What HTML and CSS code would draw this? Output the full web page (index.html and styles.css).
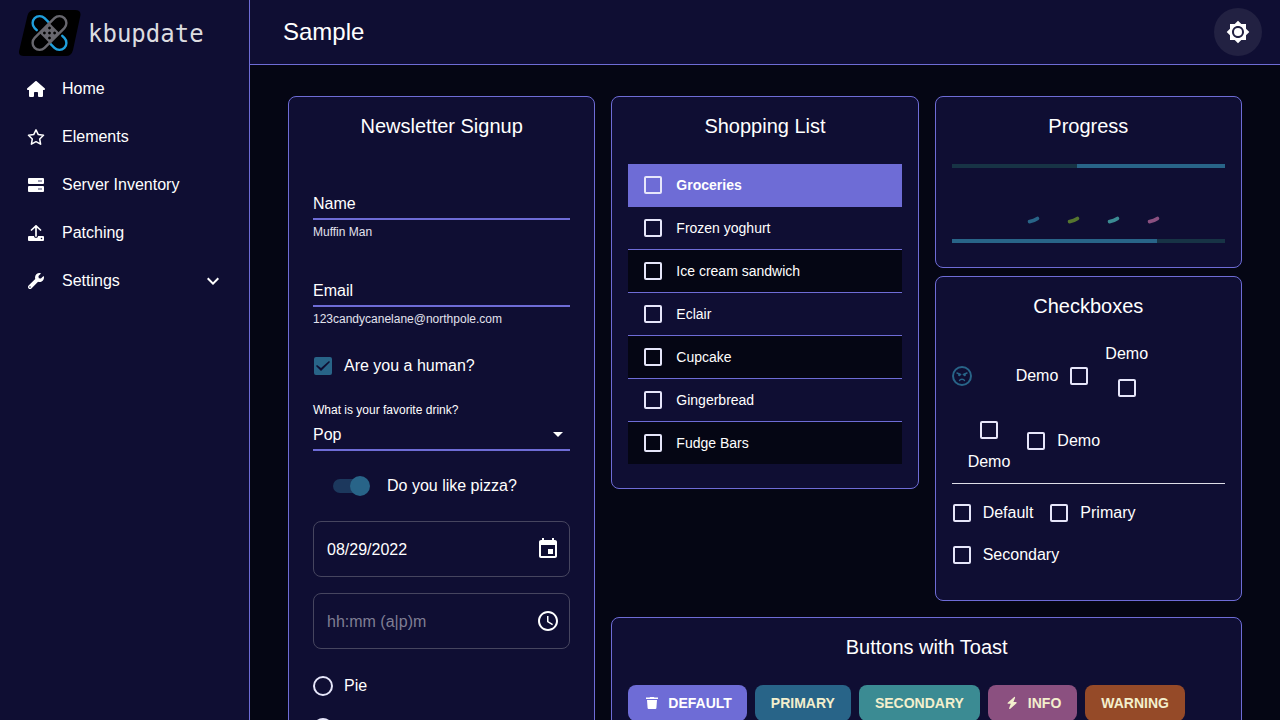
FILE: index.html
```html
<!DOCTYPE html>
<html lang="en">
<head>
<meta charset="utf-8">
<meta name="viewport" content="width=device-width, initial-scale=1">
<title>Sample - kbupdate</title>
<link rel="stylesheet" href="styles.css">
</head>
<body>
<div class="app">
  <aside class="sidebar">
    <a class="brand" href="#">
      <svg class="brand-logo" width="62" height="48" viewBox="0 0 62 48" aria-hidden="true">
        <path d="M15.500 1H56Q62.500 1 61.300 7L54 41Q52.500 47 47 47H5Q-1.300 47 .3 41L8.500 6.500Q10 1 15.500 1Z" fill="#000"/>
        <g transform="translate(30.500 24)" fill="none" stroke-width="2.400">
          <g stroke="#1f9fdc" stroke-linecap="round" transform="rotate(45)">
            <path d="M-8 -7H-14A7 7 0 0 0 -14 7H-11"/>
            <path d="M8 7H14A7 7 0 0 0 14 -7H11"/>
          </g>
          <g transform="rotate(-45)">
            <rect x="-21" y="-7" width="42" height="14" rx="7" stroke="#68676e"/>
            <rect x="-7" y="-7" width="14" height="14" fill="#68676e"/>
            <g fill="#000"><circle r="1.400"/><circle cx="-3.600" cy="-3.600" r="1.400"/><circle cx="3.600" cy="-3.600" r="1.400"/><circle cx="-3.600" cy="3.600" r="1.400"/><circle cx="3.600" cy="3.600" r="1.400"/></g>
          </g>
        </g>
      </svg>
      <span class="brand-name">kbupdate</span>
    </a>
    <nav class="nav">
      <a class="nav-item" href="#"><svg class="nav-icon" viewBox="0 0 576 512"><path d="M575.8 255.5c0 18-15 32.1-32 32.1h-32l.7 160.2c0 2.700-.2 5.400-.5 8.100V472c0 22.100-17.900 40-40 40H392c-22.100 0-40-17.900-40-40V384c0-17.700-14.300-32-32-32H256c-17.700 0-32 14.300-32 32v88c0 22.100-17.900 40-40 40H104c-22.100 0-40-17.900-40-40V287.600H32c-18 0-32-14-32-32.100c0-9 3-17 10-24L266.400 8c7-7 15-8 22-8s15 2 21 7L564.800 231.500c8 7 12 15 11 24z"/></svg>Home</a>
      <a class="nav-item" href="#"><svg class="nav-icon" viewBox="0 0 18 16"><path d="M9 .9 11.300 5.600 16.500 6.300 12.700 10 13.600 15.200 9 12.700 4.400 15.200 5.300 10 1.500 6.300 6.700 5.600Z" fill="none" stroke="currentColor" stroke-width="1.500" stroke-linejoin="round"/></svg>Elements</a>
      <a class="nav-item" href="#"><svg class="nav-icon" viewBox="0 0 18 16"><rect x="1" y="1" width="16" height="6" rx="1"/><rect x="1" y="9" width="16" height="6" rx="1"/><path d="M11 3h4v2h-4zM11 11h4v2h-4z" fill="#9f9fb4"/></svg>Server Inventory</a>
      <a class="nav-item" href="#"><svg class="nav-icon" viewBox="0 0 18 16"><path d="M4.500 5 9 .8 13.500 5M9 1.500V11" fill="none" stroke="currentColor" stroke-width="1.700" stroke-linecap="round" stroke-linejoin="round"/><path d="M2 11h5c0 2.500 4 2.500 4 0h5q1 0 1 1v3q0 1-1 1H2q-1 0-1-1v-3q0-1 1-1Z"/><circle cx="14.500" cy="13.500" r=".8" fill="#0f0e33"/></svg>Patching</a>
      <a class="nav-item" href="#"><svg class="nav-icon" viewBox="0 0 512 512"><path d="M507.730 109.100c-2.240-9.030-13.540-12.090-20.120-5.510l-74.360 74.360-67.880-11.310-11.310-67.880 74.360-74.360c6.620-6.620 3.430-17.900-5.660-20.160-47.380-11.740-99.550.91-136.580 37.930-39.640 39.640-50.550 97.100-34.050 147.200L18.740 402.760c-24.990 24.990-24.990 65.510 0 90.500 24.990 24.990 65.510 24.990 90.500 0l213.210-213.210c50.120 16.710 107.470 5.680 147.370-34.220 37.070-37.070 49.700-89.320 37.910-136.730zM64 472c-13.250 0-24-10.750-24-24 0-13.260 10.750-24 24-24s24 10.740 24 24c0 13.250-10.750 24-24 24z"/></svg>Settings<svg class="nav-chevron" viewBox="0 0 24 24"><path d="M16.590 8.590 12 13.170 7.410 8.590 6 10l6 6 6-6z"/></svg></a>
    </nav>
  </aside>

  <div class="page">
    <header class="topbar">
      <h1 class="page-title">Sample</h1>
      <button class="theme-toggle" type="button" aria-label="Toggle theme">
        <svg class="icon" viewBox="0 0 24 24"><path fill-rule="evenodd" d="M20 15.310 23.310 12 20 8.690V4h-4.690L12 .69 8.690 4H4v4.690L.69 12 4 15.310V20h4.690L12 23.310 15.310 20H20zM12 18c-3.310 0-6-2.690-6-6s2.690-6 6-6 6 2.690 6 6-2.690 6-6 6z"/><circle cx="12" cy="12" r="4"/></svg>
      </button>
    </header>

    <main class="board">
      <section class="card card-signup">
        <h2 class="card-title">Newsletter Signup</h2>
        <form class="form">
          <div class="field">
            <div class="field-box">
              <label class="field-label" for="name">Name</label>
              <input class="field-input" id="name" type="text" aria-describedby="name-help">
            </div>
            <p class="helper" id="name-help">Muffin Man</p>
          </div>
          <div class="field">
            <div class="field-box">
              <label class="field-label" for="email">Email</label>
              <input class="field-input" id="email" type="email" aria-describedby="email-help">
            </div>
            <p class="helper" id="email-help">123candycanelane@northpole.com</p>
          </div>
          <label class="choice"><input class="check" type="checkbox" checked>Are you a human?</label>
          <div class="select-field">
            <label class="select-label" for="drink">What is your favorite drink?</label>
            <div class="select-box">
              <select class="select" id="drink"><option>Pop</option><option>Water</option></select>
              <svg class="select-arrow" viewBox="0 0 24 24"><path d="m7 10 5 5 5-5z"/></svg>
            </div>
          </div>
          <label class="switch-row"><input class="switch" type="checkbox" role="switch" checked>Do you like pizza?</label>
          <div class="picker">
            <input class="picker-input" type="text" value="08/29/2022" aria-label="Date">
            <button class="picker-button" type="button" aria-label="Choose date"><svg class="icon" viewBox="0 0 24 24"><path d="M17 12h-5v5h5v-5zM16 1v2H8V1H6v2H5c-1.110 0-1.990.9-1.990 2L3 19c0 1.100.89 2 2 2h14c1.100 0 2-.9 2-2V5c0-1.100-.9-2-2-2h-1V1h-2zm3 18H5V8h14v11z"/></svg></button>
          </div>
          <div class="picker">
            <input class="picker-input" type="text" placeholder="hh:mm (a|p)m" aria-label="Time">
            <button class="picker-button" type="button" aria-label="Choose time"><svg class="icon" viewBox="0 0 24 24"><path d="M11.990 2C6.470 2 2 6.480 2 12s4.470 10 9.990 10C17.520 22 22 17.520 22 12S17.520 2 11.990 2zM12 20c-4.420 0-8-3.580-8-8s3.580-8 8-8 8 3.580 8 8-3.580 8-8 8z"/><path d="M12.500 7H11v6l5.250 3.150.75-1.230-4.500-2.670z"/></svg></button>
          </div>
          <div class="radios">
            <label class="radio-row"><input class="radio" type="radio" name="dessert">Pie</label>
            <div class="radio-row"><input class="radio" type="radio" name="dessert" aria-label="Cake"></div>
          </div>
        </form>
      </section>

      <section class="card card-list">
        <h2 class="card-title">Shopping List</h2>
        <table class="list">
          <thead>
            <tr><th class="list-check"><input class="check" type="checkbox" id="i0" aria-label="Select all"></th><th class="list-text">Groceries</th></tr>
          </thead>
          <tbody>
            <tr><td class="list-check"><input class="check" type="checkbox" id="i1"></td><td class="list-text"><label for="i1">Frozen yoghurt</label></td></tr>
            <tr><td class="list-check"><input class="check" type="checkbox" id="i2"></td><td class="list-text"><label for="i2">Ice cream sandwich</label></td></tr>
            <tr><td class="list-check"><input class="check" type="checkbox" id="i3"></td><td class="list-text"><label for="i3">Eclair</label></td></tr>
            <tr><td class="list-check"><input class="check" type="checkbox" id="i4"></td><td class="list-text"><label for="i4">Cupcake</label></td></tr>
            <tr><td class="list-check"><input class="check" type="checkbox" id="i5"></td><td class="list-text"><label for="i5">Gingerbread</label></td></tr>
            <tr><td class="list-check"><input class="check" type="checkbox" id="i6"></td><td class="list-text"><label for="i6">Fudge Bars</label></td></tr>
          </tbody>
        </table>
      </section>

      <div class="column">
        <section class="card">
          <h2 class="card-title">Progress</h2>
          <div class="bar bar-end" role="progressbar" aria-label="Loading"><div class="bar-fill" style="width:54%"></div></div>
          <div class="spinners">
            <svg class="spinner spinner-blue" viewBox="0 0 40 40"><path d="M21.500 37.600A18 18 0 0 0 29.500 34.500"/></svg>
            <svg class="spinner spinner-green" viewBox="0 0 40 40"><path d="M21.500 37.600A18 18 0 0 0 29.500 34.500"/></svg>
            <svg class="spinner spinner-teal" viewBox="0 0 40 40"><path d="M21.500 37.600A18 18 0 0 0 29.500 34.500"/></svg>
            <svg class="spinner spinner-pink" viewBox="0 0 40 40"><path d="M21.500 37.600A18 18 0 0 0 29.500 34.500"/></svg>
          </div>
          <div class="bar" role="progressbar" aria-label="Completed" aria-valuenow="75"><div class="bar-fill" style="width:75%"></div></div>
        </section>

        <section class="card">
          <h2 class="card-title">Checkboxes</h2>
          <div class="demo-row">
            <label class="mood"><input class="mood-input" type="checkbox" aria-label="Mood"><svg class="mood-icon" viewBox="0 0 20 20"><circle cx="10" cy="10" r="9" fill="none" stroke="currentColor" stroke-width="2"/><path d="M5 7 8.700 8.500M15 7 11.300 8.500M7.500 14.500C8.200 12.800 11.800 12.800 12.500 14.500" fill="none" stroke="currentColor" stroke-width="1.400" stroke-linecap="round"/><circle cx="7.300" cy="9" r="1.200"/><circle cx="12.700" cy="9" r="1.200"/></svg></label>
            <label class="demo demo-start">Demo<input class="check" type="checkbox"></label>
            <label class="demo demo-top">Demo<input class="check" type="checkbox"></label>
          </div>
          <div class="demo-row demo-row-indent">
            <label class="demo demo-bottom"><input class="check" type="checkbox">Demo</label>
            <label class="demo"><input class="check check-lead" type="checkbox">Demo</label>
          </div>
          <hr class="divider">
          <div class="choices">
            <label class="demo"><input class="check check-lead" type="checkbox">Default</label>
            <label class="demo"><input class="check check-lead" type="checkbox">Primary</label>
            <label class="demo"><input class="check check-lead" type="checkbox">Secondary</label>
          </div>
        </section>
      </div>

      <section class="card card-buttons">
        <h2 class="card-title">Buttons with Toast</h2>
        <div class="buttons">
          <button class="btn btn-default" type="button"><svg class="btn-icon" viewBox="0 0 16 16"><path d="M2 2.500h3.500L6.200 2h3.600l.7.500H14V4H2zM3 5h10l-.6 8q-.1 1-1 1H4.600q-.9 0-1-1z"/></svg>Default</button>
          <button class="btn btn-primary" type="button">Primary</button>
          <button class="btn btn-secondary" type="button">Secondary</button>
          <button class="btn btn-info" type="button"><svg class="btn-icon" viewBox="0 0 16 16"><path d="M10.200 2 3.700 7.800q-.6.900.4 1H6.800L5.100 13.200q-.1 1.100.9.700L12.500 8.200q.5-1-.5-1.100H9.400L11.100 2.800Q11.100 1.500 10.200 2z"/></svg>Info</button>
          <button class="btn btn-warning" type="button">Warning</button>
        </div>
      </section>
    </main>
  </div>
</div>
</body>
</html>
```

FILE: styles.css
```css
:root {
  --ground: #050614;
  --panel: #0f0e33;
  --accent: #6e6cd6;
  --primary: #286488;
  --track: #173345;
  --outline: #e6e6fa;
}

* { box-sizing: border-box; }

body {
  margin: 0;
  background: var(--ground);
  color: #fff;
  font: 16px/24px "Liberation Sans", Arial, sans-serif;
}

h1, h2, p { margin: 0; font-weight: 400; }
button, input, select { font: inherit; color: inherit; }
svg { fill: currentColor; flex: none; }

.app { display: flex; height: 100vh; overflow: hidden; }

.sidebar {
  flex: 0 0 250px;
  background: var(--panel);
  border-right: 1px solid var(--accent);
}

.brand {
  display: flex;
  align-items: center;
  gap: 7px;
  height: 65px;
  padding: 1px 0 0 19px;
  color: #dcdce0;
  text-decoration: none;
}
.brand-name { padding-top: 2px; font: 24px/32px "DejaVu Sans Mono", monospace; }

.nav-item {
  display: flex;
  align-items: center;
  gap: 17px;
  height: 48px;
  padding: 0 24px 0 27px;
  color: #fff;
  text-decoration: none;
}
.nav-icon { width: 18px; height: 16px; }
.nav-chevron { width: 24px; height: 24px; margin-left: auto; }

.page { flex: 1; min-width: 0; }

.topbar {
  display: flex;
  align-items: center;
  justify-content: space-between;
  height: 65px;
  padding: 0 18px 0 33px;
  background: var(--panel);
  border-bottom: 1px solid var(--accent);
}
.page-title { font-size: 24px; line-height: 32px; }
.theme-toggle {
  display: grid;
  place-items: center;
  width: 48px;
  height: 48px;
  padding: 0;
  border: 0;
  border-radius: 50%;
  background: #222142;
}
.icon { width: 24px; height: 24px; }

.board {
  display: grid;
  grid-template-columns: repeat(3, minmax(0, 1fr));
  grid-template-rows: auto 1fr;
  gap: 16px;
  align-items: start;
  padding: 31px 38px;
}

.card {
  padding: 16px 16px 24px;
  background: var(--panel);
  border: 1px solid var(--accent);
  border-radius: 8px;
}
.card-signup { grid-row: span 2; }
.card-buttons { grid-column: 2 / 4; }
.column { display: flex; flex-direction: column; gap: 8px; }
.card-title {
  margin-bottom: 24px;
  font-size: 20px;
  line-height: 27px;
  text-align: center;
}

.form {
  display: flex;
  flex-direction: column;
  gap: 16px;
  padding: 8px 8px 0;
}
.field { padding: 16px 0 3px; }
.field-box { display: grid; height: 32px; border-bottom: 2px solid var(--accent); }
.field-label, .field-input { grid-area: 1 / 1; line-height: 32px; }
.field-input {
  width: 100%;
  height: 30px;
  min-width: 0;
  padding: 0;
  border: 0;
  background: transparent;
  outline: 0;
}
.helper { margin-top: 4px; color: #e2e2ee; font-size: 12px; line-height: 16px; }

.check {
  appearance: none;
  flex: none;
  width: 18px;
  height: 18px;
  margin: 1px;
  border: 2px solid var(--outline);
  border-radius: 2px;
}
.check:checked { border-color: var(--primary); background: var(--primary); }
.check:checked::before {
  content: "";
  display: block;
  width: 14px;
  height: 14px;
  background: var(--panel);
  clip-path: polygon(5px 9px, 13px 2px, 14px 3px, 5px 12px, 0 7px, 1px 6px);
}

.choice { display: flex; align-items: center; gap: 11px; height: 40px; }

.select-field { display: flex; flex-direction: column; }
.select-label { font-size: 12px; line-height: 16px; }
.select-box {
  display: grid;
  align-items: center;
  height: 33px;
  border-bottom: 2px solid var(--accent);
}
.select {
  grid-area: 1 / 1;
  width: 100%;
  height: 31px;
  appearance: none;
  padding: 2px 0 0;
  border: 0;
  background: transparent;
}
.select option { color: #000; }
.select-arrow {
  grid-area: 1 / 1;
  justify-self: end;
  width: 24px;
  height: 24px;
  pointer-events: none;
}

.switch-row { display: flex; align-items: center; gap: 20px; height: 38px; padding-left: 20px; }
.switch {
  appearance: none;
  width: 34px;
  height: 14px;
  margin: 0;
  border-radius: 7px;
  background: #1c385d;
}
.switch::before {
  content: "";
  display: block;
  width: 20px;
  height: 20px;
  margin: -3px 0 0 17px;
  border-radius: 50%;
  background: var(--primary);
}

.picker {
  display: flex;
  align-items: center;
  height: 56px;
  padding: 0 9px 0 13px;
  border: 1px solid #46455f;
  border-radius: 8px;
}
.picker-input {
  flex: 1;
  min-width: 0;
  padding: 2px 0 0;
  border: 0;
  background: transparent;
  outline: 0;
}
.picker-input::placeholder { color: #7f7e94; opacity: 1; }
.picker-button { display: flex; padding: 0; border: 0; background: none; }

.radio-row { display: flex; align-items: center; gap: 11px; height: 42px; }
.radio {
  appearance: none;
  width: 20px;
  height: 20px;
  margin: 0;
  border: 2px solid var(--outline);
  border-radius: 50%;
}

.list { width: 100%; border-collapse: separate; border-spacing: 0; font-size: 14px; line-height: 20px; }
.list th, .list td { height: 43px; padding: 0; text-align: left; border-bottom: 1px solid var(--accent); }
.list th { background: var(--accent); }
.list tbody tr:nth-child(even) { background: var(--ground); }
.list tbody tr:last-child td { height: 42px; border-bottom: 0; }
.list .list-check { width: 48px; padding-left: 15px; }
.list .check { display: block; }

.bar { display: flex; height: 4px; background: var(--track); }
.bar-end { justify-content: flex-end; }
.bar-fill { background: var(--primary); }
.spinners { display: flex; justify-content: center; padding: 16px 0 15px; }
.spinner {
  width: 40px;
  height: 40px;
  fill: none;
  stroke: currentColor;
  stroke-width: 3.6;
  stroke-linecap: round;
}
.spinner-blue { color: #286488; }
.spinner-green { color: #55752f; }
.spinner-teal { color: #3b8b93; }
.spinner-pink { color: #8b5080; }

.demo-row { display: flex; align-items: center; gap: 16px; height: 64px; }
.demo-row-indent { height: 66px; padding-left: 16px; }
.demo { display: flex; align-items: center; }
.demo-start { gap: 11px; }
.demo-top, .demo-bottom { flex-direction: column; height: 64px; line-height: 20px; }
.demo-top { gap: 14px; }
.demo-bottom { gap: 12px; padding-top: 11px; }
.check-lead { margin-right: 12px; }
.mood { display: flex; width: 48px; color: var(--primary); }
.mood-input { appearance: none; width: 0; height: 0; margin: 0; }
.mood-icon { width: 20px; height: 20px; }
.divider { height: 1px; margin: 9px 0 8px; border: 0; background: #dedee8; }
.choices { display: flex; flex-wrap: wrap; column-gap: 16px; }
.choices .demo { height: 42px; }

.buttons { display: flex; flex-wrap: wrap; gap: 8px; }
.btn {
  display: flex;
  align-items: center;
  gap: 8px;
  padding: 6px 16px;
  border: 0;
  border-radius: 8px;
  color: #f3efcd;
  font-size: 14px;
  font-weight: 700;
  line-height: 24px;
  text-transform: uppercase;
}
.btn-icon { width: 16px; height: 16px; }
.btn-default { padding-right: 15px; background: #6e6cd6; color: #fff; }
.btn-primary { background: #286488; }
.btn-secondary { background: #3b8b93; }
.btn-info { background: #8b5080; }
.btn-warning { background: #954a28; }
```
